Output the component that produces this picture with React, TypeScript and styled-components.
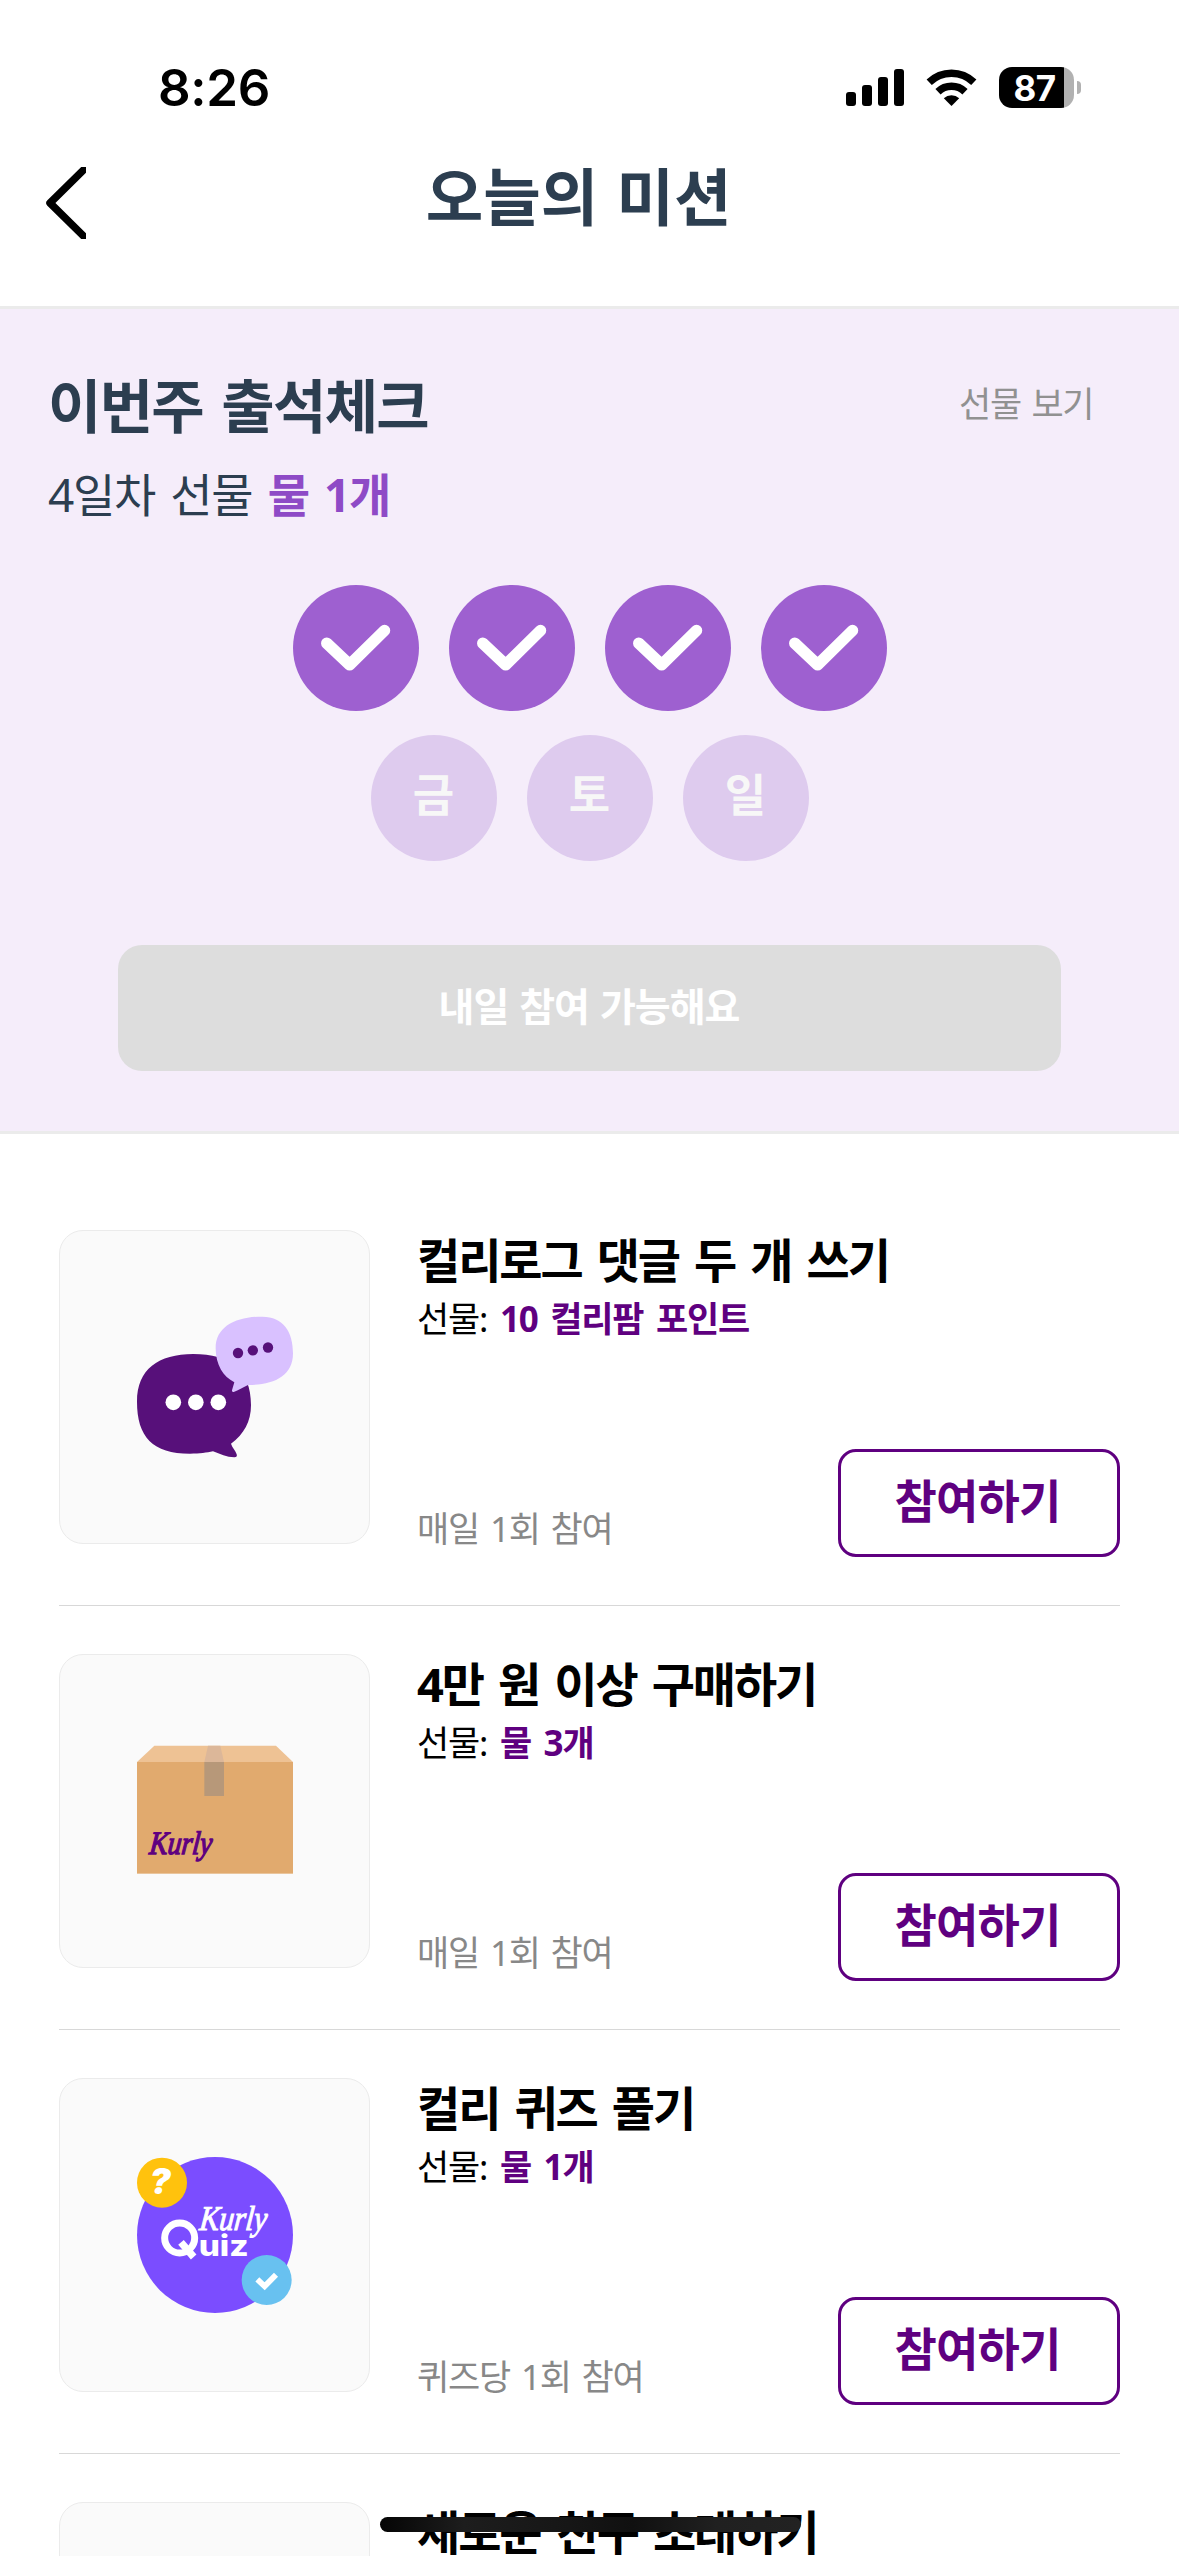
import React from "react";
import styled, { createGlobalStyle } from "styled-components";

const GlobalStyle = createGlobalStyle`
  * { box-sizing: border-box; }
  html, body { margin: 0; padding: 0; background: #ffffff; }
  body {
    width: 1179px;
    height: 2556px;
    overflow: hidden;
    font-family: "Noto Sans", "Noto Sans CJK KR", sans-serif;
  }
`;

const Screen = styled.main`
  position: relative;
  width: 1179px;
  height: 2556px;
  overflow: hidden;
  background: #ffffff;
`;

const StatusBar = styled.div`
  display: flex;
  justify-content: space-between;
  height: 132px;
  padding: 58px 98px 0 158px;
`;

const Clock = styled.span`
  font: 600 51px/60px Inter, sans-serif;
  letter-spacing: -0.3px;
  color: #000000;
`;

const StatusIcons = styled.div`
  display: flex;
  align-items: flex-start;
  padding-top: 9px;
`;

const SignalIcon = styled.svg`
  width: 59px;
  height: 41px;
  margin-right: 21px;
`;

const WifiIcon = styled.svg`
  width: 52px;
  height: 41px;
  margin-right: 21px;
`;

const Battery = styled.div`
  display: flex;
  align-items: center;
`;

const BatteryBody = styled.div`
  width: 75px;
  height: 41px;
  padding: 0 11px 0 7px;
  border-radius: 13px;
  background: linear-gradient(to right, #000000 65px, #b1b1b1 65px);
  color: #ffffff;
  font: 700 35px/42px Inter, sans-serif;
  letter-spacing: -0.5px;
  text-align: center;
`;

const BatteryTip = styled.div`
  width: 4px;
  height: 13px;
  margin-left: 3px;
  border-radius: 0 5px 5px 0;
  background: #b1b1b1;
`;

const Header = styled.header`
  display: grid;
  grid-template-columns: 200px 1fr 200px;
  align-items: start;
  height: 174px;
  padding-top: 24px;
`;

const BackButton = styled.button`
  display: block;
  width: 100px;
  margin: 11px 0 0 46px;
  padding: 0;
  border: 0;
  background: none;
  line-height: 0;
  text-align: left;
`;

const PageTitle = styled.h1`
  margin: 1px 0 0;
  padding-right: 22px;
  font-size: 62.5px;
  font-weight: 700;
  line-height: 80px;
  text-align: center;
  word-spacing: 2px;
  color: #2c3e50;
`;

const Attendance = styled.section`
  height: 828px;
  padding: 61px 48px 59px;
  border-top: 3px solid #ebebeb;
  border-bottom: 3px solid #ebebeb;
  background: #f5edfa;
`;

const AttendanceTop = styled.div`
  display: flex;
  justify-content: space-between;
  align-items: flex-start;
`;

const AttendanceTitle = styled.h2`
  margin: 0;
  font-size: 58px;
  font-weight: 700;
  line-height: 72px;
  letter-spacing: -1.7px;
  word-spacing: 5px;
  color: #2c3e50;
`;

const GiftLink = styled.a`
  margin: 12px 38px 0 0;
  font-size: 35px;
  line-height: 44px;
  letter-spacing: -1.4px;
  word-spacing: 3px;
  color: #919191;
`;

const AttendanceSub = styled.p`
  margin: 22px 0 61px;
  font-size: 46px;
  line-height: 60px;
  letter-spacing: -1.3px;
  word-spacing: 4.6px;
  color: #2c3e50;
`;

const Accent = styled.strong`
  font-weight: 700;
  color: #8e4ac6;
`;

const Days = styled.div`
  display: flex;
  flex-wrap: wrap;
  justify-content: center;
  gap: 24px 30px;
  width: 624px;
  margin: 0 auto;
`;

const Day = styled.div<{ $done?: boolean }>`
  display: flex;
  align-items: center;
  justify-content: center;
  width: 126px;
  height: 126px;
  padding-bottom: ${(p) => (p.$done ? "0" : "6px")};
  border-radius: 50%;
  background: ${(p) => (p.$done ? "#9e60d0" : "#decbee")};
  color: #f7f7f7;
  font-size: 45px;
  font-weight: 700;
  line-height: 60px;
`;

const TomorrowButton = styled.button`
  display: flex;
  align-items: center;
  justify-content: center;
  width: 943px;
  height: 126px;
  margin: 84px 0 0 70px;
  padding: 0 1px 4px 0;
  border: 0;
  border-radius: 24px;
  background: #dddddd;
  color: #ffffff;
  font-family: inherit;
  font-size: 39px;
  font-weight: 700;
  line-height: 50px;
  letter-spacing: -1px;
  word-spacing: 1.8px;
`;

const MissionList = styled.ul`
  margin: 0;
  padding: 48px 59px 0;
  list-style: none;
`;

const Mission = styled.li`
  display: flex;
  height: 424px;
  padding: 48px 0;
  border-bottom: 1px solid #d8d8d8;
`;

const Thumb = styled.div`
  display: flex;
  align-items: center;
  justify-content: center;
  flex: none;
  width: 311px;
  height: 314px;
  border: 1px solid #ebebeb;
  border-radius: 24px;
  background: #fafafa;
`;

const Art = styled.svg`
  width: 156px;
  height: 156px;
`;

const MissionBody = styled.div`
  display: flex;
  flex: 1;
  flex-direction: column;
  margin-left: 47px;
`;

const MissionTitle = styled.h3`
  margin: 0;
  font-size: 47px;
  font-weight: 700;
  line-height: 60px;
  letter-spacing: -2.1px;
  word-spacing: 5px;
  color: #000000;
`;

const Reward = styled.p`
  margin: 7px 0 0;
  font-size: 35px;
  line-height: 44px;
  letter-spacing: -1.2px;
  word-spacing: 4.8px;
  color: #000000;
`;

const RewardValue = styled.strong`
  font-weight: 700;
  color: #5f0080;
`;

const MissionFooter = styled.div`
  display: flex;
  align-items: flex-end;
  justify-content: space-between;
  margin-top: auto;
`;

const Frequency = styled.span`
  margin-bottom: 6px;
  font-size: 35px;
  line-height: 44px;
  letter-spacing: -1.2px;
  word-spacing: 3px;
  color: #888888;
`;

const JoinButton = styled.button`
  display: flex;
  align-items: center;
  justify-content: center;
  width: 282px;
  height: 108px;
  padding: 0 3px 6px 0;
  border: 3px solid #5f0080;
  border-radius: 18px;
  background: #ffffff;
  color: #5f0080;
  font-family: inherit;
  font-size: 46px;
  font-weight: 700;
  line-height: 60px;
  letter-spacing: -0.8px;
`;

const HomeIndicator = styled.div`
  position: absolute;
  left: 380px;
  top: 2517px;
  width: 421px;
  height: 15px;
  border-radius: 8px;
  background: linear-gradient(to right, #050505, #1d1d1d 20%, #161616 45%, #101010 60%, #202020 80%, #222222);
`;

const CheckMark = () => (
  <svg width="72" height="58" viewBox="0 0 72 58" fill="none">
    <path
      d="M6.800 24.300L29.600 45.800L64.500 11.500"
      stroke="#ffffff"
      strokeWidth="11.500"
      strokeLinecap="round"
      strokeLinejoin="round"
    />
  </svg>
);

const ChatArt = () => (
  <Art viewBox="291 297 468 468">
    <path
      d="M460 432C355 432 291 478 291 575C291 680 338 731 450 731C480 731 500 728 519 724C540 732 560 742 583 742Q593 742 590 733C587 722 577 714 573 701C612 672 633 635 633 585C633 480 570 432 460 432Z"
      fill="#57107a"
    />
    <path
      d="M667 320C590 320 527 348 527 415C527 465 550 500 583 517L576 541Q575 548 583 545C597 540 610 532 624 525C700 525 759 500 759 430C759 365 730 320 667 320Z"
      fill="#d9c1ff"
    />
    <g fill="#ffffff">
      <circle cx="400" cy="577" r="23.500" />
      <circle cx="467.500" cy="577" r="23.500" />
      <circle cx="535" cy="577" r="23.500" />
    </g>
    <g fill="#57107a">
      <circle cx="594" cy="429" r="15.500" />
      <circle cx="638.500" cy="421" r="15.500" />
      <circle cx="684" cy="412.500" r="15.500" />
    </g>
  </Art>
);

const BoxArt = () => (
  <Art viewBox="291 279 468 468">
    <path d="M343 317H708L759 366H291Z" fill="#eec294" />
    <path d="M504 317H541L552 366H493Z" fill="#dcb799" />
    <rect x="291" y="366" width="468" height="335" fill="#e1aa6e" />
    <rect x="493" y="366" width="59" height="102" fill="#b79879" />
    <text
      transform="translate(326 642) skewX(-6)"
      textLength="188"
      lengthAdjust="spacingAndGlyphs"
      fontFamily="Liberation Serif, serif"
      fontStyle="italic"
      fontSize="98"
      fill="#5f0080"
      stroke="#5f0080"
      strokeWidth="4"
    >
      Kurly
    </text>
  </Art>
);

const QuizArt = () => (
  <Art viewBox="51 81 468 468">
    <circle cx="285" cy="315" r="234" fill="#7b4dff" />
    <circle cx="126" cy="158" r="75" fill="#ffc20d" />
    <text
      x="121"
      y="193"
      textAnchor="middle"
      fontFamily="Inter, sans-serif"
      fontStyle="italic"
      fontWeight="900"
      fontSize="106"
      fill="#ffffff"
    >
      ?
    </text>
    <text
      transform="translate(236 299) skewX(-6)"
      textLength="202"
      lengthAdjust="spacingAndGlyphs"
      fontFamily="Liberation Serif, serif"
      fontStyle="italic"
      fontSize="104"
      fill="#ffffff"
      stroke="#ffffff"
      strokeWidth="3"
    >
      Kurly
    </text>
    <circle cx="179" cy="324" r="45" fill="none" stroke="#ffffff" strokeWidth="21" />
    <path d="M183 337L221 381" stroke="#ffffff" strokeWidth="22" />
    <text
      x="236"
      y="378"
      textLength="150"
      lengthAdjust="spacingAndGlyphs"
      fontFamily="Inter, sans-serif"
      fontWeight="800"
      fontSize="86"
      fill="#ffffff"
    >
      uiz
    </text>
    <circle cx="440" cy="450" r="75" fill="#68c1f0" />
    <path d="M412 448L434 469L468 434" fill="none" stroke="#ffffff" strokeWidth="17" />
  </Art>
);

type MissionData = {
  title: string;
  reward: string;
  frequency: string;
  art: React.ReactNode;
};

const missions: MissionData[] = [
  { title: "컬리로그 댓글 두 개 쓰기", reward: "10 컬리팜 포인트", frequency: "매일 1회 참여", art: <ChatArt /> },
  { title: "4만 원 이상 구매하기", reward: "물 3개", frequency: "매일 1회 참여", art: <BoxArt /> },
  { title: "컬리 퀴즈 풀기", reward: "물 1개", frequency: "퀴즈당 1회 참여", art: <QuizArt /> },
];

export default function App() {
  return (
    <Screen>
      <GlobalStyle />
      <StatusBar>
        <Clock>8:26</Clock>
        <StatusIcons>
          <SignalIcon viewBox="0 0 59 41">
            <rect x="0" y="25" width="10" height="14" rx="3" />
            <rect x="16" y="18" width="10" height="21" rx="3" />
            <rect x="32" y="10" width="10" height="29" rx="3" />
            <rect x="48" y="2" width="10" height="37" rx="3" />
          </SignalIcon>
          <WifiIcon viewBox="0 0 52 41">
            <path d="M25.500 39L17.800 31.200A11.500 11.500 0 0 1 33.200 31.200Z" />
            <path d="M12 24.800A19.500 19.500 0 0 1 39 24.800" fill="none" stroke="#000" strokeWidth="7.500" />
            <path d="M3.200 15.200A32 32 0 0 1 47.800 15.200" fill="none" stroke="#000" strokeWidth="7.500" />
          </WifiIcon>
          <Battery>
            <BatteryBody>87</BatteryBody>
            <BatteryTip />
          </Battery>
        </StatusIcons>
      </StatusBar>

      <Header>
        <BackButton aria-label="뒤로">
          <svg width="40" height="72" viewBox="0 0 40 72" fill="none">
            <path d="M38 2.500L4 36L38 69.500" stroke="#000000" strokeWidth="7.500" strokeLinecap="round" strokeLinejoin="round" />
          </svg>
        </BackButton>
        <PageTitle>오늘의 미션</PageTitle>
      </Header>

      <Attendance>
        <AttendanceTop>
          <AttendanceTitle>이번주 출석체크</AttendanceTitle>
          <GiftLink>선물 보기</GiftLink>
        </AttendanceTop>
        <AttendanceSub>
          4일차 선물 <Accent>물 1개</Accent>
        </AttendanceSub>
        <Days>
          {[0, 1, 2, 3].map((day) => (
            <Day key={day} $done>
              <CheckMark />
            </Day>
          ))}
          {["금", "토", "일"].map((day) => (
            <Day key={day}>{day}</Day>
          ))}
        </Days>
        <TomorrowButton>내일 참여 가능해요</TomorrowButton>
      </Attendance>

      <MissionList>
        {missions.map((mission) => (
          <Mission key={mission.title}>
            <Thumb>{mission.art}</Thumb>
            <MissionBody>
              <MissionTitle>{mission.title}</MissionTitle>
              <Reward>
                선물: <RewardValue>{mission.reward}</RewardValue>
              </Reward>
              <MissionFooter>
                <Frequency>{mission.frequency}</Frequency>
                <JoinButton>참여하기</JoinButton>
              </MissionFooter>
            </MissionBody>
          </Mission>
        ))}
        <Mission>
          <Thumb />
          <MissionBody>
            <MissionTitle>새로운 친구 초대하기</MissionTitle>
          </MissionBody>
        </Mission>
      </MissionList>
      <HomeIndicator />
    </Screen>
  );
}
